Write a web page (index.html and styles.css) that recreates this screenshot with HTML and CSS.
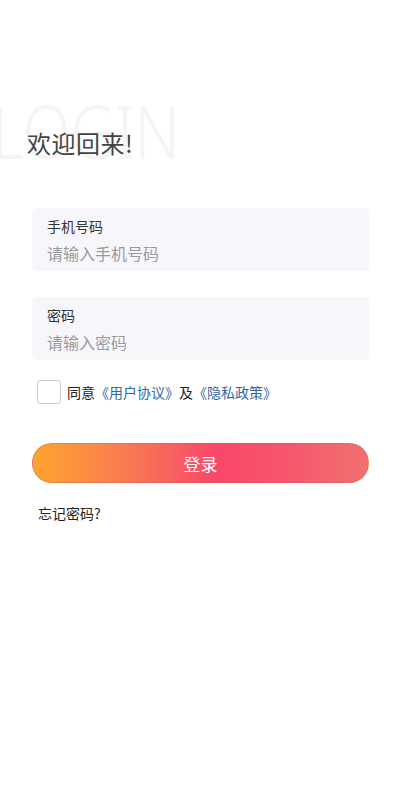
FILE: index.html
```html
<!DOCTYPE html>
<html lang="zh">
  <head>
    <meta charset="UTF-8" />
    <meta name="viewport" content="width=device-width, initial-scale=1" />
    <title>登录</title>
    <link rel="stylesheet" href="styles.css">
  </head>
  <body>
    <div class="page">
      <div class="header">
        <span class="watermark">LOGIN</span>
        <h2 class="title">欢迎回来!</h2>
      </div>
      <form class="form">
        <div class="field">
          <label for="phone">手机号码</label>
          <input type="text" id="phone" placeholder="请输入手机号码" />
        </div>
        <div class="field">
          <label for="pwd">密码</label>
          <input type="password" id="pwd" placeholder="请输入密码" />
        </div>
        <div class="agree">
          <span class="check"></span>
          <span>同意<a href="#">《用户协议》</a>及<a href="#">《隐私政策》</a></span>
        </div>
        <button type="button" class="submit">登录</button>
        <p class="forgot">忘记密码?</p>
      </form>
    </div>
  </body>
</html>
```

FILE: styles.css
```css
body {
  margin: 0;
  background-color: #fff;
  font-family: "Noto Sans CJK SC", "Noto Sans", sans-serif;
  color: #333;
}
.page {
  padding: 0 31px 0 32px;
}
.header {
  position: relative;
  height: 208px;
}
/* big faded word behind the title */
.watermark {
  position: absolute;
  left: -40px;
  top: 94px;
  font-family: "Noto Sans", sans-serif;
  font-size: 73px;
  font-weight: 300;
  color: #f4f4f4;
  line-height: 1;
  transform: scaleX(0.85);
  transform-origin: left top;
}
.title {
  position: relative;
  margin: 0 0 0 -5px;
  padding-top: 125px;
  font-size: 24px;
  font-weight: 400;
  letter-spacing: 0.5px;
  line-height: 36px;
  color: #444;
}
.field {
  background-color: #f7f6fb;
  border-radius: 5px;
  padding: 8px 15px 6px;
  margin-bottom: 26px;
  height: 49px;
}
.field label {
  display: block;
  font-size: 14px;
  line-height: 20px;
  color: #333;
}
.field input {
  display: block;
  width: 100%;
  border: none;
  background: transparent;
  padding: 0;
  margin-top: 5px;
  font-family: inherit;
  font-size: 16px;
  line-height: 24px;
  outline: none;
}
.field input::placeholder {
  color: #9a9a9a;
}
.agree {
  display: flex;
  align-items: center;
  gap: 6px;
  margin-top: -6px;
  padding-left: 5px;
  font-size: 14px;
  color: #222;
}
.check {
  width: 22px;
  height: 22px;
  border: 1px solid #ccc;
  border-radius: 3px;
}
.agree a {
  color: #2f68a3;
  text-decoration: none;
}
.submit {
  display: block;
  width: 100%;
  height: 40px;
  margin-top: 39px;
  border: 1px solid rgba(200, 90, 90, 0.35);
  border-radius: 20px;
  background: linear-gradient(to right, #fca52d 0%, #f97f4f 25%, #f8476a 55%, #f5566c 75%, #f1706f 100%);
  color: #fff;
  font-family: inherit;
  font-size: 17px;
}
.forgot {
  margin: 20px 0 0 6px;
  font-size: 14px;
  color: #222;
}
```
